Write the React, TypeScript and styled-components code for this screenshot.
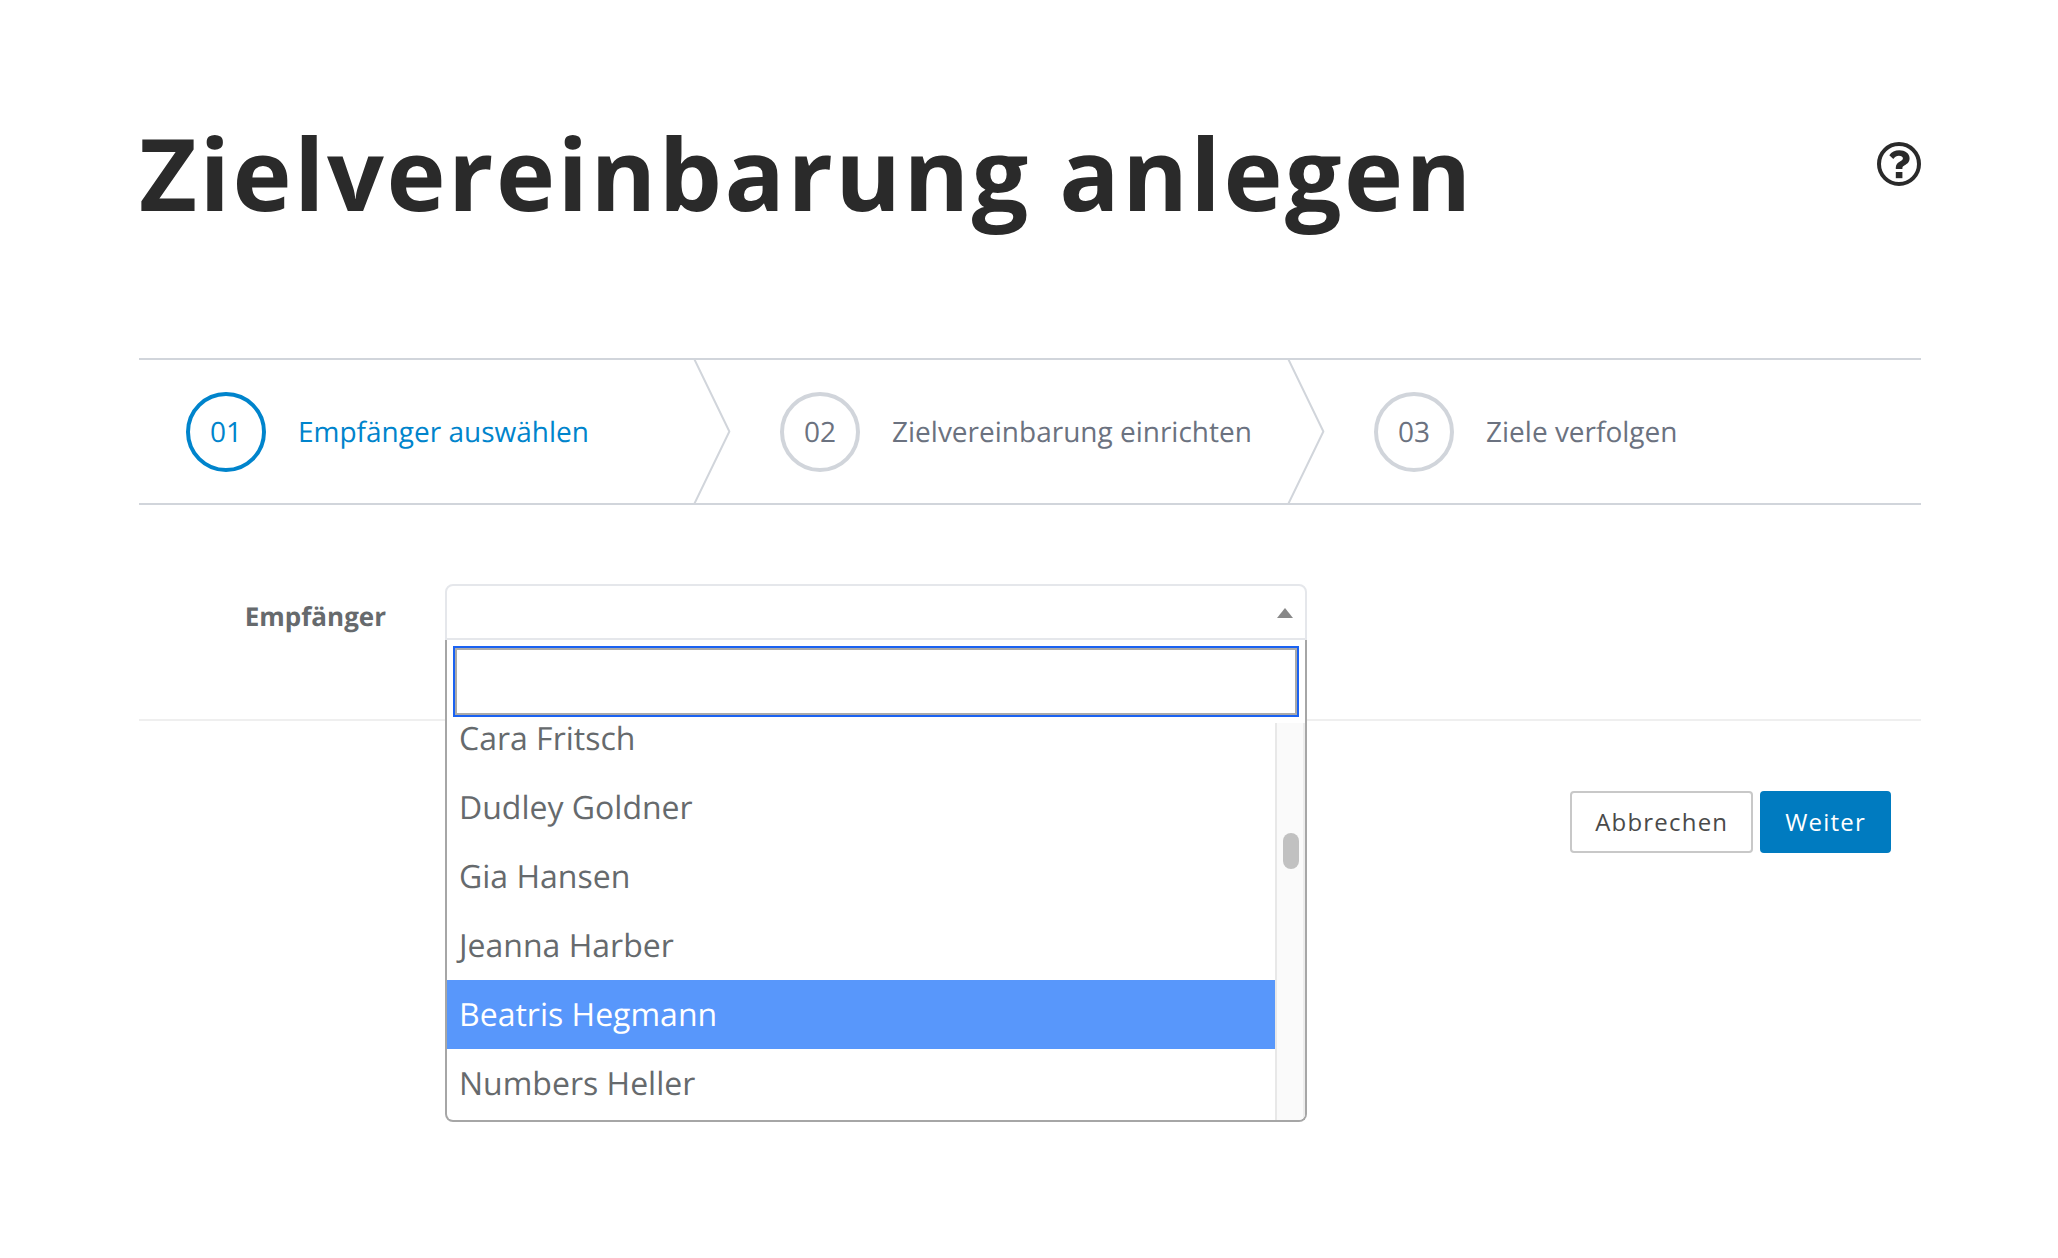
import React, { useState } from "react";
import styled, { createGlobalStyle } from "styled-components";

const color = {
  heading: "#2a2a2a",
  text: "#666a6d",
  muted: "#6b7280",
  line: "#d1d5db",
  softLine: "#e5e7eb",
  divider: "#efefef",
  primary: "#0084cc",
  primaryButton: "#007bc0",
  highlight: "#5897fb",
};

const GlobalStyle = createGlobalStyle`
  *, *::before, *::after { box-sizing: border-box; }
  body {
    margin: 0;
    background: #fff;
    color: ${color.text};
    font-family: "Open Sans", "Noto Sans", sans-serif;
    text-rendering: geometricPrecision;
  }
`;

const Page = styled.main`
  min-height: 100vh;
  padding: 103px 137px 103px 139px;
`;

const Header = styled.header`
  display: flex;
  justify-content: space-between;
  align-items: flex-start;
  margin-bottom: 115px;
`;

const Title = styled.h1`
  margin: 0;
  color: ${color.heading};
  font-size: 100px;
  font-weight: 700;
  line-height: 140px;
  letter-spacing: 0.025em;
`;

const HelpButton = styled.button`
  display: block;
  margin-top: 39px;
  padding: 0;
  border: 0;
  background: none;
  color: ${color.heading};
  line-height: 0;
  cursor: pointer;
`;

const Steps = styled.ol`
  display: flex;
  margin: 0;
  padding: 0;
  list-style: none;
  border-top: 2px solid ${color.line};
  border-bottom: 2px solid ${color.line};
`;

const Step = styled.li`
  position: relative;
  flex: 1;
`;

const StepLink = styled.a<{ $active?: boolean }>`
  display: flex;
  align-items: center;
  gap: 32px;
  height: 143px;
  padding: 0 47px;
  color: ${(p) => (p.$active ? color.primary : color.muted)};
  font-size: 28px;
  line-height: 40px;
  text-decoration: none;
  white-space: nowrap;
`;

const StepNumber = styled.span<{ $active?: boolean }>`
  display: flex;
  flex: none;
  align-items: center;
  justify-content: center;
  width: 80px;
  height: 80px;
  border: 4px solid ${(p) => (p.$active ? color.primary : color.line)};
  border-radius: 50%;
`;

const Chevron = styled.svg`
  position: absolute;
  top: 0;
  right: 0;
  width: 40px;
  height: 100%;
  color: ${color.line};
`;

const FormRow = styled.div`
  display: grid;
  grid-template-columns: 306fr 862fr 614fr;
  align-items: start;
  padding: 79px 0;
  border-bottom: 2px solid ${color.divider};
`;

const Label = styled.label`
  padding: 14px 59px 0 0;
  font-size: 26px;
  font-weight: 700;
  line-height: 36px;
  text-align: right;
`;

const Picker = styled.div`
  position: relative;
`;

const Select = styled.select`
  display: block;
  width: 100%;
  height: 56px;
  padding: 0 48px 0 12px;
  appearance: none;
  border: 2px solid ${color.softLine};
  border-radius: 8px 8px 0 0;
  background: #fff;
  color: inherit;
  font: inherit;
  font-size: 32px;
  outline: none;
`;

const Arrow = styled.span`
  position: absolute;
  top: 24px;
  right: 14px;
  border: 8px solid transparent;
  border-top-width: 0;
  border-bottom: 10px solid #888;
  pointer-events: none;
`;

const Dropdown = styled.div`
  position: absolute;
  top: 100%;
  left: 0;
  right: 0;
  border: 2px solid #a6a6a6;
  border-top: 0;
  border-radius: 0 0 8px 8px;
  background: #fff;
  overflow: hidden;
`;

const SearchBox = styled.div`
  padding: 8px;
`;

const Search = styled.input`
  display: block;
  width: 100%;
  height: 67px;
  padding: 8px;
  border: 2px solid #aaa;
  outline: 2px solid #1a62f2;
  color: inherit;
  font: inherit;
  font-size: 32px;
`;

const Results = styled.div`
  display: flex;
  height: 397px;
  overflow: hidden;
`;

const Options = styled.ul`
  flex: 1;
  margin: -19px 0 0;
  padding: 0;
  list-style: none;
`;

const Option = styled.li<{ $active: boolean }>`
  padding: 12px;
  background: ${(p) => (p.$active ? color.highlight : "transparent")};
  color: ${(p) => (p.$active ? "#fff" : "inherit")};
  font-size: 32px;
  line-height: 45px;
  cursor: pointer;
`;

const ScrollTrack = styled.div`
  width: 30px;
  padding: 110px 4px 0 6px;
  border-left: 2px solid #e8e8e8;
  border-right: 2px solid #ededed;
  background: #fafafa;
`;

const ScrollThumb = styled.div`
  width: 16px;
  height: 36px;
  border-radius: 8px;
  background: #c1c1c1;
`;

const Actions = styled.div`
  display: flex;
  justify-content: flex-end;
  gap: 7px;
  padding: 70px 30px 0;
`;

const Button = styled.button<{ $primary?: boolean }>`
  height: 62px;
  padding: 0 23px 2px;
  border: 2px solid ${(p) => (p.$primary ? color.primaryButton : "#c8c8c8")};
  border-radius: 4px;
  background: ${(p) => (p.$primary ? color.primaryButton : "#fff")};
  color: ${(p) => (p.$primary ? "#fff" : "#4a4a4a")};
  font: inherit;
  font-size: 24px;
  letter-spacing: 0.05em;
  cursor: pointer;
`;

const steps = [
  { number: "01", title: "Empfänger auswählen" },
  { number: "02", title: "Zielvereinbarung einrichten" },
  { number: "03", title: "Ziele verfolgen" },
];

const people = [
  "Cara Fritsch",
  "Dudley Goldner",
  "Gia Hansen",
  "Jeanna Harber",
  "Beatris Hegmann",
  "Numbers Heller",
];

function HelpIcon() {
  return (
    <svg width="44" height="44" viewBox="0 0 44 44" fill="none" aria-hidden="true">
      <circle cx="22" cy="22" r="20" stroke="currentColor" strokeWidth="4" />
      <path
        d="M12.3 13.2C14.5 9.8 18 8.3 22.3 8.3C28 8.3 32.6 11.5 32.6 16.2C32.6 20 30.2 21.8 27.7 23.2C26 24.2 25.4 24.8 25.4 26.3V27H18.8V25.6C18.8 22.2 20.8 20.7 23 19.4C24.8 18.4 25.9 17.7 25.9 16.3C25.9 14.8 24.2 13.8 21.9 13.8C19.6 13.8 18.1 14.7 16.3 16.9Z"
        fill="currentColor"
      />
      <path d="M18.8 30H25.4V36.2H18.8Z" fill="currentColor" />
    </svg>
  );
}

export default function App() {
  const [active, setActive] = useState("Beatris Hegmann");

  return (
    <>
      <GlobalStyle />
      <Page>
        <Header>
          <Title>Zielvereinbarung anlegen</Title>
          <HelpButton type="button" aria-label="Hilfe">
            <HelpIcon />
          </HelpButton>
        </Header>

        <nav aria-label="Fortschritt">
          <Steps>
            {steps.map((step, i) => (
              <Step key={step.number}>
                <StepLink href="#" $active={i === 0} aria-current={i === 0 ? "step" : undefined}>
                  <StepNumber $active={i === 0}>{step.number}</StepNumber>
                  <span>{step.title}</span>
                </StepLink>
                {i < steps.length - 1 && (
                  <Chevron viewBox="0 0 22 80" preserveAspectRatio="none" fill="none" aria-hidden="true">
                    <path
                      d="M0 -2L20 40L0 82"
                      stroke="currentColor"
                      strokeWidth="2"
                      strokeLinejoin="round"
                      vectorEffect="non-scaling-stroke"
                    />
                  </Chevron>
                )}
              </Step>
            ))}
          </Steps>
        </nav>

        <form onSubmit={(e) => e.preventDefault()}>
          <FormRow>
            <Label htmlFor="recipient">Empfänger</Label>
            <Picker>
              <Select id="recipient" defaultValue="">
                <option value="" />
              </Select>
              <Arrow />
              <Dropdown>
                <SearchBox>
                  <Search type="search" aria-label="Empfänger suchen" />
                </SearchBox>
                <Results>
                  <Options role="listbox" aria-label="Empfänger">
                    {people.map((name) => (
                      <Option
                        key={name}
                        role="option"
                        aria-selected={name === active}
                        $active={name === active}
                        onMouseEnter={() => setActive(name)}
                      >
                        {name}
                      </Option>
                    ))}
                  </Options>
                  <ScrollTrack>
                    <ScrollThumb />
                  </ScrollTrack>
                </Results>
              </Dropdown>
            </Picker>
          </FormRow>
          <Actions>
            <Button type="button">Abbrechen</Button>
            <Button type="submit" $primary>
              Weiter
            </Button>
          </Actions>
        </form>
      </Page>
    </>
  );
}
